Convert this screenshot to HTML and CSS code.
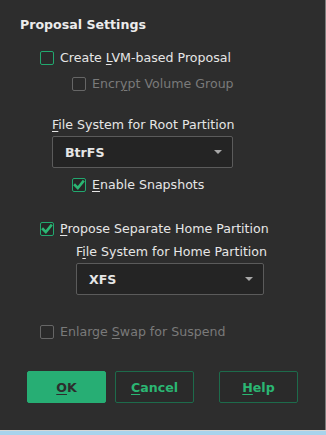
FILE: index.html
```html
<!DOCTYPE html>
<html lang="en">
<head>
  <meta charset="UTF-8" />
  <title>Proposal Settings</title>
  <link rel="stylesheet" href="styles.css">
</head>
<body>
  <div class="panel">
    <h1 class="title">Proposal Settings</h1>

    <div class="check-row row-lvm">
      <span class="box focus"></span>
      <span>Create <u>L</u>VM-based Proposal</span>
    </div>
    <div class="check-row row-encrypt disabled">
      <span class="box"></span>
      <span>Encr<u>y</u>pt Volume Group</span>
    </div>

    <div class="field-label root-label"><u>F</u>ile System for Root Partition</div>
    <div class="combo root-combo">
      <span>BtrFS</span>
      <span class="arrow"></span>
    </div>
    <div class="check-row row-snap">
      <span class="box checked">
        <svg viewBox="0 0 14 14" width="14" height="14"><path d="M3 7.2 L5.8 10 L11 3.6" fill="none" stroke="#2bb673" stroke-width="2.6" stroke-linecap="square"/></svg>
      </span>
      <span><u>E</u>nable Snapshots</span>
    </div>

    <div class="check-row row-home">
      <span class="box checked">
        <svg viewBox="0 0 14 14" width="14" height="14"><path d="M3 7.2 L5.8 10 L11 3.6" fill="none" stroke="#2bb673" stroke-width="2.6" stroke-linecap="square"/></svg>
      </span>
      <span><u>P</u>ropose Separate Home Partition</span>
    </div>
    <div class="field-label home-label">F<u>i</u>le System for Home Partition</div>
    <div class="combo home-combo">
      <span>XFS</span>
      <span class="arrow"></span>
    </div>

    <div class="check-row row-swap disabled">
      <span class="box"></span>
      <span>Enlarge <u>S</u>wap for Suspend</span>
    </div>

    <div class="buttons">
      <button class="btn primary"><u>O</u>K</button>
      <button class="btn"><u>C</u>ancel</button>
      <button class="btn help"><u>H</u>elp</button>
    </div>
  </div>
  <div class="edge-light"></div>
  <div class="edge-blue"></div>
</body>
</html>
```

FILE: styles.css
```css
body {
  margin: 0;
  width: 326px;
  height: 435px;
  overflow: hidden;
  background: #2d2d2d;
  color: #e6e6e6;
  font-family: "DejaVu Sans", sans-serif;
  font-size: 12.6px;
}
.panel {
  height: 430px;
  box-sizing: border-box;
  padding: 15px 0 0 20px;
  border-right: 1px solid #7c7c7c;
  display: flex;
  flex-direction: column;
  align-items: flex-start;
}
.title {
  margin: 0;
  font-size: 12.6px;
  font-weight: bold;
  line-height: 20px;
  color: #ececec;
}
u {
  text-decoration: underline;
  text-underline-offset: 2px;
}
.check-row {
  display: flex;
  align-items: center;
  gap: 6px;
  height: 14px;
  line-height: 14px;
  white-space: nowrap;
}
.box {
  width: 14px;
  height: 14px;
  box-sizing: border-box;
  border: 1px solid #6e6e6e;
  border-radius: 2px;
  background: #2a2a2a;
  display: flex;
}
.box.focus { border-color: #22a86f; }
.box.checked { border-color: #22a86f; background: #262626; }
.box svg { margin: -1px; }
.disabled { color: #7a7a7a; }
.disabled .box { border-color: #666; }

.row-lvm { margin: 16px 0 0 20px; }
.row-encrypt { margin: 12px 0 0 52px; }
.root-label { margin: 27px 0 0 32px; }
.root-combo { margin: 4px 0 0 32px; width: 181px; }
.row-snap { margin: 10px 0 0 52px; }
.row-home { margin: 30px 0 0 20px; }
.home-label { margin: 9px 0 0 56px; }
.home-combo { margin: 4px 0 0 56px; width: 188px; }
.row-swap { margin: 30px 0 0 20px; }

.field-label {
  height: 14px;
  line-height: 14px;
  white-space: nowrap;
}
.combo {
  height: 32px;
  box-sizing: border-box;
  border: 1px solid #5b5b5b;
  border-radius: 2px;
  background: #242424;
  display: flex;
  align-items: center;
  justify-content: space-between;
  padding: 0 10px 0 12px;
  font-weight: bold;
  font-size: 12.6px;
}
.arrow {
  width: 0;
  height: 0;
  border-left: 4px solid transparent;
  border-right: 4px solid transparent;
  border-top: 4px solid #a8a8a8;
}
.buttons {
  display: flex;
  margin: 32px 0 0 7px;
}
.btn {
  width: 79px;
  height: 32px;
  box-sizing: border-box;
  border: 1px solid #1d6b4b;
  border-radius: 2px;
  background: #2a2a2a;
  color: #2bb673;
  font-family: "DejaVu Sans", sans-serif;
  font-size: 12.6px;
  font-weight: bold;
  margin-right: 9px;
  padding: 0;
}
.btn.primary {
  background: #27ae74;
  border-color: #27ae74;
  color: #2d2d2d;
}
.btn.help { margin-left: 16px; }
.edge-light {
  height: 1px;
  background: #d6d6d6;
}
.edge-blue {
  height: 4px;
  background: #a8d3ec;
}
```
